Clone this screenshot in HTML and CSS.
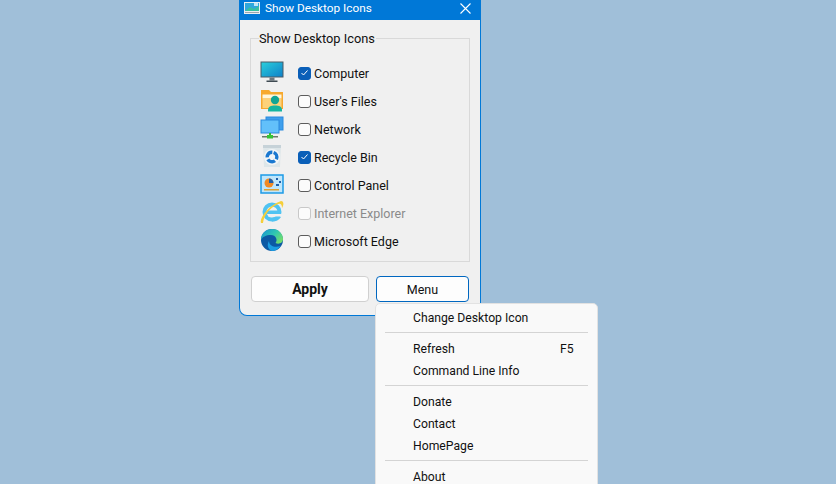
FILE: index.html
```html
<!DOCTYPE html>
<html lang="en">
<head>
    <meta charset="UTF-8">
    <title>Show Desktop Icons</title>
    <link rel="stylesheet" href="styles.css">
</head>
<body>

<div class="window">
    <div class="titleBar">
        <svg class="titleIcon" width="16" height="12" viewBox="0 0 16 12">
            <rect width="16" height="12" fill="#e8eef2"/>
            <rect x="1" y="1" width="14" height="8" fill="#2fa8dc"/>
            <path d="M1 9 L6 5 L10 7 L15 4 V9 Z" fill="#37c0a0"/>
            <rect x="10" y="1" width="4" height="3" fill="#bfe8f8"/>
            <rect x="1" y="10" width="14" height="1" fill="#9aa6ad"/>
        </svg>
        <span class="titleText">Show Desktop Icons</span>
        <svg class="closeIcon" width="11" height="11" viewBox="0 0 11 11">
            <path d="M0.5 0.5 L10.5 10.5 M10.5 0.5 L0.5 10.5" stroke="#fff" stroke-width="1.1" fill="none"/>
        </svg>
    </div>
    <div class="content">
        <fieldset class="group">
            <legend>Show Desktop Icons</legend>

            <div class="row">
                <svg class="rowIcon" width="24" height="24" viewBox="0 0 24 24">
                    <defs>
                        <linearGradient id="screen" x1="0" y1="0" x2="1" y2="1">
                            <stop offset="0" stop-color="#2ad0dc"/>
                            <stop offset="1" stop-color="#0f7fc8"/>
                        </linearGradient>
                    </defs>
                    <rect x="1" y="2" width="22" height="15" fill="url(#screen)" stroke="#4a5a66" stroke-width="1"/>
                    <rect x="9.5" y="17.5" width="5" height="3" fill="#6d7880"/>
                    <rect x="6.5" y="20.5" width="11" height="1.5" fill="#3f4a52"/>
                </svg>
                <span class="check on"><svg width="9" height="8" viewBox="0 0 9 8"><path d="M1.5 4 L3.5 6 L7.5 1.500" stroke="#fff" stroke-width="1" fill="none"/></svg></span>
                <span class="label">Computer</span>
            </div>

            <div class="row">
                <svg class="rowIcon" width="24" height="24" viewBox="0 0 24 24">
                    <path d="M1 2 H9 L11 4 H23 V21 H1 Z" fill="#f7a92e"/>
                    <rect x="2.500" y="6.500" width="19" height="4" fill="#fff6dc"/>
                    <rect x="2.500" y="10.500" width="19" height="9.500" fill="#fdd27a"/>
                    <circle cx="15" cy="12" r="4.200" fill="#12a594"/>
                    <path d="M8 23.500 C7.500 18 11 17.500 15 17.500 C19 17.500 22.500 18 22 23.500 Z" fill="#15b5a0"/>
                </svg>
                <span class="check"></span>
                <span class="label">User's Files</span>
            </div>

            <div class="row">
                <svg class="rowIcon" width="24" height="24" viewBox="0 0 24 24">
                    <rect x="6" y="1" width="17" height="13" fill="#3f9fec" stroke="#2a8ade"/>
                    <rect x="1" y="4" width="18" height="13" fill="#62c0fa" stroke="#2a8ade"/>
                    <rect x="2" y="20" width="16" height="1.500" fill="#6a7a6a"/>
                    <rect x="9" y="17" width="2" height="2" fill="#2fbe2f"/>
                    <rect x="7" y="19" width="6" height="3.500" fill="#36c436"/>
                </svg>
                <span class="check"></span>
                <span class="label">Network</span>
            </div>

            <div class="row">
                <svg class="rowIcon" width="24" height="24" viewBox="0 0 24 24">
                    <path d="M3 1 H21 L20 23 H4 Z" fill="#dde6e9"/>
                    <rect x="3" y="1" width="18" height="3" fill="#c6d2d8"/>
                    <circle cx="12" cy="13" r="8" fill="#f1f5f7"/>
                    <circle cx="12" cy="13" r="4.800" fill="none" stroke="#1a78d0" stroke-width="3.400" stroke-dasharray="8 2" transform="rotate(-70 12 13)"/>
                </svg>
                <span class="check on"><svg width="9" height="8" viewBox="0 0 9 8"><path d="M1.5 4 L3.5 6 L7.5 1.500" stroke="#fff" stroke-width="1" fill="none"/></svg></span>
                <span class="label">Recycle Bin</span>
            </div>

            <div class="row">
                <svg class="rowIcon" width="24" height="24" viewBox="0 0 24 24">
                    <rect x="1" y="3" width="22" height="18" fill="#bfe6fb" stroke="#1d9ae6" stroke-width="1.500"/>
                    <circle cx="9" cy="11" r="4.500" fill="#f08a24"/>
                    <path d="M9 11 V6.500 A4.500 4.500 0 0 1 13.500 11 Z" fill="#1e5fa8"/>
                    <rect x="16" y="6" width="2" height="2" fill="#1e5fa8"/>
                    <rect x="19" y="9" width="2" height="2" fill="#1e5fa8"/>
                    <rect x="16" y="12" width="3" height="2" fill="#1e5fa8"/>
                    <rect x="4" y="17" width="15" height="1.500" fill="#e0a030"/>
                </svg>
                <span class="check"></span>
                <span class="label">Control Panel</span>
            </div>

            <div class="row">
                <svg class="rowIcon" width="24" height="24" viewBox="0 0 24 24">
                    <circle cx="12" cy="12" r="7.500" fill="none" stroke="#4fc3f2" stroke-width="4"/>
                    <rect x="7" y="10.500" width="14" height="3.500" fill="#4fc3f2"/>
                    <rect x="8" y="14" width="14" height="2.500" fill="#f0f0f0"/>
                    <path d="M15 17 H21 C19 20 16 21.500 12 21.500 L12 18 Z" fill="#4fc3f2"/>
                    <path d="M1 23 C-1 18 9 5 21 1 C24 1 24 5 22 8 C22 4 20 3 17 4.500 C10 8 4 15 3 23 Z" fill="#f5cf3a"/>
                </svg>
                <span class="check disabled"></span>
                <span class="label muted">Internet Explorer</span>
            </div>

            <div class="row">
                <svg class="rowIcon" width="24" height="24" viewBox="0 0 24 24">
                    <defs>
                        <linearGradient id="edgeTop" x1="0" y1="0" x2="1" y2="0.6">
                            <stop offset="0" stop-color="#1590d8"/>
                            <stop offset="0.6" stop-color="#30c8b0"/>
                            <stop offset="1" stop-color="#6fdc70"/>
                        </linearGradient>
                    </defs>
                    <circle cx="12" cy="12" r="11" fill="#0c59a4"/>
                    <path d="M1 12 C1 5 6 1 12 1 C19 1 23 6 23 11 C23 15.500 18.500 16.500 15.500 15 C18 12 16 7 11 7 C6 7 2 9 1 12 Z" fill="url(#edgeTop)"/>
                    <path d="M9 13 C9 18 15 20 20.500 18 C18.500 21 15 23 12 23 C9 22 6 18 9 13 Z" fill="#1b9de2"/>
                </svg>
                <span class="check"></span>
                <span class="label">Microsoft Edge</span>
            </div>
        </fieldset>

        <div class="buttons">
            <button class="btn apply">Apply</button>
            <button class="btn menuBtn">Menu</button>
        </div>
    </div>
</div>

<div class="menu">
    <div class="item">Change Desktop Icon</div>
    <div class="sep"></div>
    <div class="item">Refresh<span class="key">F5</span></div>
    <div class="item">Command Line Info</div>
    <div class="sep"></div>
    <div class="item">Donate</div>
    <div class="item">Contact</div>
    <div class="item">HomePage</div>
    <div class="sep"></div>
    <div class="item">About</div>
</div>

</body>
</html>
```

FILE: styles.css
```css
html, body {
    height: 100%;
}

body {
    margin: 0;
    overflow: hidden;
    background-color: #a0bfd9;
    font-family: Roboto, "Noto Sans", sans-serif;
    font-size: 12.5px;
    color: #111111;
}

.window {
    position: absolute;
    left: 239px;
    top: 0;
    width: 242px;
    height: 316px;
    box-sizing: border-box;
    background-color: #f0f0f0;
    border: 1px solid #0078d7;
    border-top: none;
    border-radius: 0 0 8px 8px;
    display: flex;
    flex-direction: column;
}

.titleBar {
    height: 20px;
    margin: 0 -1px;
    padding: 0 10px 4px 5px;
    box-sizing: border-box;
    background-color: #0078d7;
    color: #ffffff;
    font-size: 11.8px;
    display: flex;
    align-items: center;
}

.titleIcon {
    margin-right: 5px;
}

.titleText {
    flex: 1;
}

.content {
    padding: 9px 10px 0 10px;
}

.group {
    margin: 0;
    padding: 12px 0 0 9px;
    height: 233px;
    box-sizing: border-box;
    border: 1px solid #d9d9d9;
}

.group legend {
    padding: 2px 1px 0 0;
    margin-left: -1px;
    font-size: 12.8px;
    line-height: 16px;
    color: #111111;
}

.row {
    height: 28px;
    display: flex;
    align-items: center;
}

.rowIcon {
    margin-right: 14px;
    margin-bottom: 2px;
}

.check {
    width: 11px;
    height: 11px;
    margin-right: 3px;
    box-sizing: content-box;
    border: 1px solid #5c5c5c;
    border-radius: 3px;
    background-color: #fbfbfb;
    display: flex;
    align-items: center;
    justify-content: center;
}

.check.on {
    background-color: #0a5fb8;
    border-color: #0a5fb8;
}

.check.disabled {
    border-color: #c8c8c8;
}

.label.muted {
    color: #8a8a8a;
}

.buttons {
    display: flex;
    margin-top: 14px;
    padding-left: 1px;
    gap: 7px;
}

.btn {
    height: 26px;
    padding: 0;
    background-color: #fdfdfd;
    border: 1px solid #d0d0d0;
    border-radius: 4px;
    font-family: inherit;
    font-size: 12.5px;
    color: #111111;
}

.apply {
    width: 118px;
    font-size: 14px;
    font-weight: bold;
}

.menuBtn {
    width: 93px;
    border-color: #0067c0;
}

.menu {
    position: absolute;
    left: 375px;
    top: 303px;
    width: 223px;
    box-sizing: border-box;
    padding: 3px 9px 0 9px;
    background-color: #f9f9f9;
    border: 1px solid #e2e2e2;
    border-radius: 5px;
    font-size: 12.2px;
}

.item {
    position: relative;
    height: 22px;
    line-height: 22px;
    padding-left: 28px;
}

.key {
    position: absolute;
    left: 175px;
}

.sep {
    height: 1px;
    margin: 3px 0 5px 0;
    background-color: #d4d4d4;
}
```
